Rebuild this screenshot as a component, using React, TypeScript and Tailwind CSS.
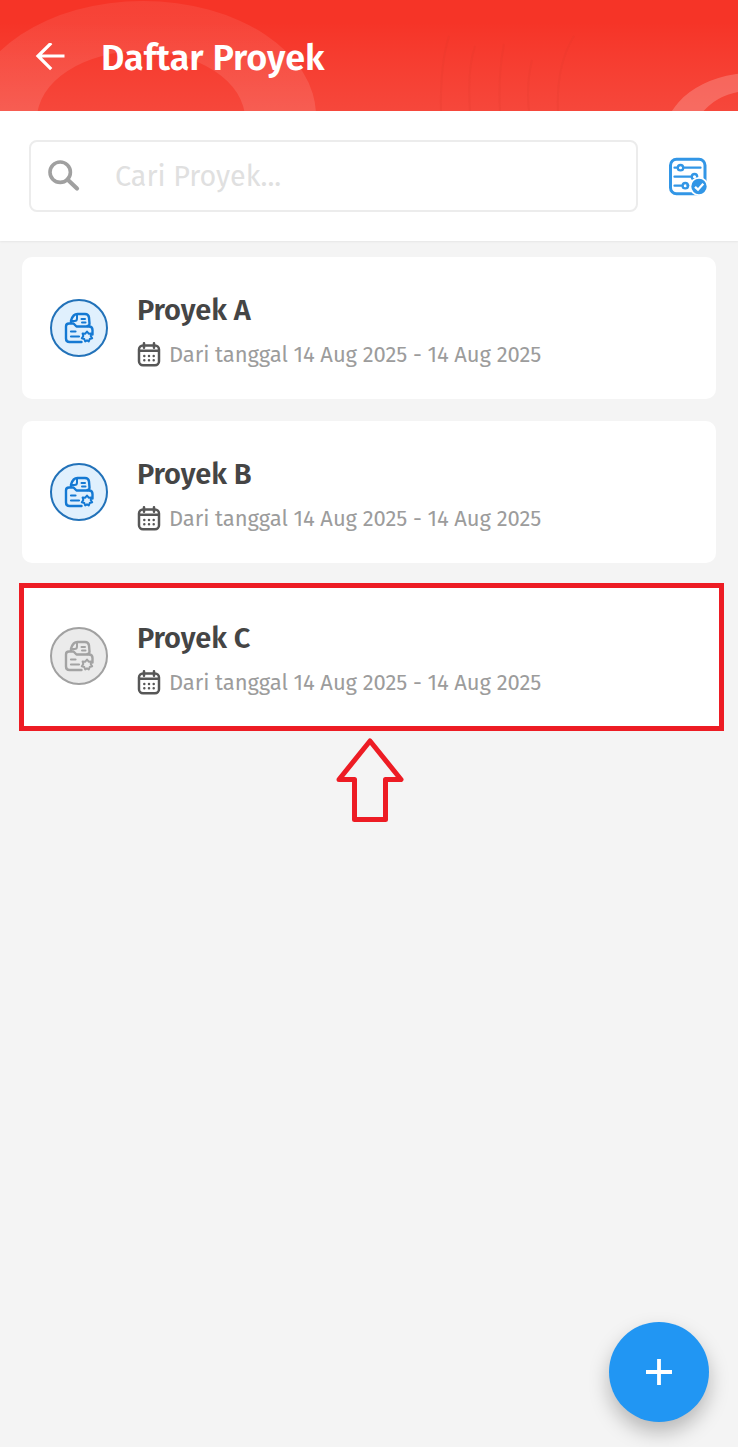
import type { ReactNode } from "react";

type Project = {
  name: string;
  period: string;
  active: boolean;
  highlighted?: boolean;
};

const projects: Project[] = [
  {
    name: "Proyek A",
    period: "Dari tanggal 14 Aug 2025 - 14 Aug 2025",
    active: true,
  },
  {
    name: "Proyek B",
    period: "Dari tanggal 14 Aug 2025 - 14 Aug 2025",
    active: true,
  },
  {
    name: "Proyek C",
    period: "Dari tanggal 14 Aug 2025 - 14 Aug 2025",
    active: false,
    highlighted: true,
  },
];

function HeaderPattern() {
  return (
    <svg
      className="absolute inset-0"
      width="738"
      height="111"
      viewBox="0 0 738 111"
      fill="none"
    >
      <defs>
        <linearGradient id="ring" x1="0" y1="0" x2="0" y2="111" gradientUnits="userSpaceOnUse">
          <stop stopColor="#fff" stopOpacity="0.07" />
          <stop offset="1" stopColor="#fff" stopOpacity="0.12" />
        </linearGradient>
      </defs>
      <path
        fill="url(#ring)"
        fillRule="evenodd"
        d="M-30 116a173 115 0 0 1 346 0zM37 119a104 68 0 0 1 208 0z"
      />
      <path
        fill="#fff"
        fillOpacity="0.2"
        fillRule="evenodd"
        d="M664 138a88 65 0 0 1 176 0zM692 141a58 50 0 0 1 116 0z"
      />
      <g stroke="#d9362b" strokeOpacity="0.16" strokeWidth="2">
        <path d="M449 36Q440 65 441 111" />
        <path d="M475 46Q467 70 470 111" />
        <path d="M504 44Q498 75 500 111" />
        <path d="M532 60Q526 85 529 111" />
        <path d="M574 36Q556 65 558 111" />
      </g>
    </svg>
  );
}

function BackIcon() {
  return (
    <svg width="30" height="30" viewBox="0 0 30 30" fill="none" stroke="#fff" strokeWidth="3.2">
      <path d="M29.500 13H3M16.200 0L3 13l13.200 13.200" />
    </svg>
  );
}

function SearchIcon() {
  return (
    <svg width="32" height="32" viewBox="0 0 32 32" fill="none" stroke="#a0a0a0">
      <circle cx="12.200" cy="12.200" r="10.200" strokeWidth="3.600" />
      <path d="M19.500 19.500l9.500 9" strokeWidth="4.200" strokeLinecap="round" />
    </svg>
  );
}

function FilterIcon() {
  return (
    <svg
      className="mt-0.5"
      width="40"
      height="40"
      viewBox="0 0 40 40"
      fill="none"
      stroke="#3296e6"
    >
      <rect x="2.500" y="2.300" width="34.500" height="34.500" rx="6" strokeWidth="3" />
      <g strokeWidth="2.300" strokeLinecap="round">
        <path d="M6.500 10.700h3M15.500 10.700h17M6.500 19.700h17M6.500 28.700h7M19.500 28.700h1" />
        <circle cx="12.500" cy="10.700" r="2.700" />
        <circle cx="26.500" cy="19.700" r="2.700" />
        <circle cx="17.300" cy="28.700" r="2.700" />
      </g>
      <circle cx="31" cy="29.500" r="8.600" fill="#3296e6" stroke="#fff" strokeWidth="1.800" />
      <path d="M27 29.800l3 2.900 5.300-6" stroke="#fff" strokeWidth="2.300" />
    </svg>
  );
}

function ProjectIcon() {
  return (
    <svg
      width="30"
      height="32"
      viewBox="0 0 30 32"
      fill="none"
      stroke="currentColor"
      strokeWidth="2.400"
      strokeLinecap="round"
      strokeLinejoin="round"
    >
      <path d="M7 10.500V8.500Q9 2 13.500 2H21q3.500 0 4 3.500l.5 6Q25.500 14 23.500 14" />
      <path d="M8 9h2.500q2.500 0 2.500-2.500V3M17.500 7h3.500M18 10.500h3.500" strokeWidth="2" />
      <path d="M17.500 30H5.500Q2 30 2 26.500V14.500q0-3 3-3h4.500l3 3H25q3.500 0 3.500 3.500v4.500" />
      <path d="M7 19.500h4.500M7 24.500h8" strokeWidth="2.200" />
      <path
        d="M23 19.500l1.700 2.200 2.700-.3-.7 2.600 1.500 2.200-2.500.8-.9 2.500-1.800-1.200-1.800 1.200-.9-2.500-2.500-.8 1.500-2.200-.7-2.600 2.700.3z"
        strokeWidth="2"
      />
    </svg>
  );
}

function CalendarIcon() {
  return (
    <svg width="24" height="25" viewBox="0 0 24 25" fill="none" stroke="#575757" strokeWidth="2.500">
      <rect x="2" y="3.500" width="20" height="19.800" rx="4" />
      <path d="M2.200 8.800h19.600M7 1.200v4.500M17 1.200v4.500" strokeLinecap="round" />
      <path
        d="M7.300 14h.01M12 14h.01M16.700 14h.01M7.300 18.300h.01M12 18.300h.01M16.700 18.300h.01"
        strokeLinecap="round"
        strokeWidth="2.500"
      />
    </svg>
  );
}

function Badge({ active, children }: { active: boolean; children: ReactNode }) {
  return (
    <div
      className={
        active
          ? "flex size-[58px] shrink-0 items-center justify-center rounded-full border-2 border-[#2272b9] bg-[#e0f0fd] text-[#1479d3]"
          : "flex size-[58px] shrink-0 items-center justify-center rounded-full border-2 border-[#a1a1a1] bg-[#ebebeb] text-[#a3a3a3]"
      }
    >
      {children}
    </div>
  );
}

function ProjectCard({ project }: { project: Project }) {
  return (
    <div className="relative flex h-[142px] items-center rounded-[10px] bg-white pl-7">
      {project.highlighted && (
        <div className="absolute -top-0.5 -right-2 -left-[3px] h-[148px] border-5 border-[#ed1c24] bg-white" />
      )}
      <div className="relative flex items-center gap-[29px]">
        <Badge active={project.active}>
          <ProjectIcon />
        </Badge>
        <div className="flex flex-col gap-1.5 pt-2">
          <h2 className="h-[38px] text-[29px] leading-[40px] font-semibold tracking-[-0.1px] whitespace-nowrap text-[#454545]">
            {project.name}
          </h2>
          <div className="flex h-[38px] items-center gap-2">
            <CalendarIcon />
            <span className="pt-px text-[22px] leading-[30px] tracking-[-0.08px] whitespace-nowrap text-[#9c9c9c]">
              {project.period}
            </span>
          </div>
        </div>
      </div>
    </div>
  );
}

export default function App() {
  return (
    <div className="relative flex h-[1447px] w-[738px] flex-col overflow-hidden bg-[#f4f4f4] font-['Fira_Sans','Noto_Sans',sans-serif]">
      <header className="relative h-[111px] shrink-0 bg-linear-to-b from-[#f63427] from-20% to-[#f6473b]">
        <HeaderPattern />
        <div className="relative flex h-full items-center gap-9 pt-1 pl-[35px]">
          <BackIcon />
          <h1 className="text-[36px] leading-[48px] font-semibold whitespace-nowrap text-white">
            Daftar Proyek
          </h1>
        </div>
      </header>

      <div className="flex h-[130px] shrink-0 items-center justify-between bg-white pr-[30px] pl-[29px] shadow-[0_1px_2px_rgba(0,0,0,0.06)]">
        <div className="flex h-[72px] w-[609px] items-center gap-[35px] rounded-lg border-2 border-[#ececec] pl-[17px]">
          <SearchIcon />
          <span className="pt-0.5 text-[28.700px] leading-10 whitespace-nowrap text-[#e0e0e0]">
            Cari Proyek...
          </span>
        </div>
        <FilterIcon />
      </div>

      <main className="flex flex-col gap-[22px] px-[22px] pt-4">
        {projects.map((project) => (
          <ProjectCard key={project.name} project={project} />
        ))}
      </main>

      <svg
        className="absolute top-[736px] left-[334px]"
        width="72"
        height="90"
        viewBox="0 0 72 90"
        fill="none"
        stroke="#ed1c24"
        strokeWidth="5"
        strokeLinejoin="round"
      >
        <path d="M36 5L67 43.500H51.500v40h-31v-40H5z" />
      </svg>

      <button className="absolute top-[1322px] left-[609px] flex size-[100px] items-center justify-center rounded-full bg-[#2196f3] shadow-[0_10px_20px_rgba(0,0,0,0.25)]">
        <svg width="26" height="26" viewBox="0 0 26 26" stroke="#fff" strokeWidth="3.800">
          <path d="M13 0v26M0 13h26" />
        </svg>
      </button>
    </div>
  );
}
